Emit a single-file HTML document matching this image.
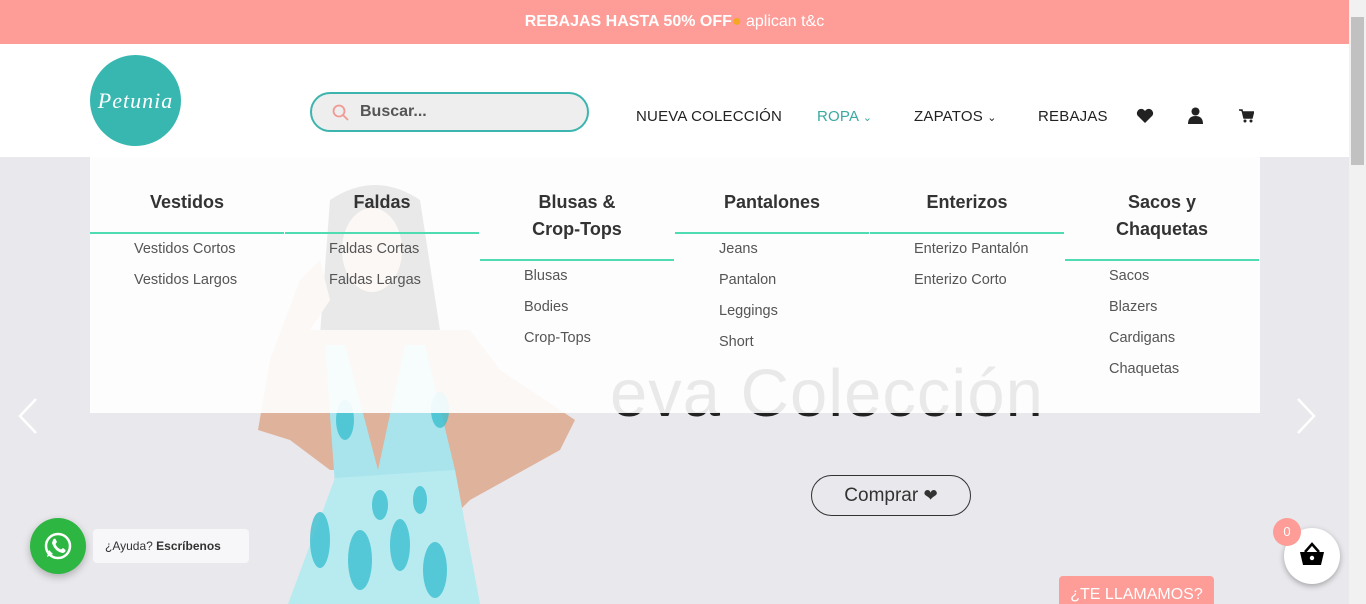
<!DOCTYPE html>
<html><head><meta charset="utf-8">
<style>
*{margin:0;padding:0;box-sizing:border-box}
html,body{width:1366px;height:604px;overflow:hidden;background:#e9e8ec;font-family:"Liberation Sans",sans-serif;position:relative}
.abs{position:absolute}
#banner{left:0;top:0;width:1349px;height:44px;background:#fe9c97;color:#fff;text-align:center;font-size:16px;line-height:44px}
#header{left:0;top:44px;width:1349px;height:113px;background:#fff}
#logo{left:90px;top:55px;width:91px;height:91px;border-radius:50%;background:#37b7b0;color:#fff;font-size:22px;text-align:center;line-height:91px;font-family:"Liberation Serif",serif;font-style:italic;letter-spacing:1px}
#search{left:310px;top:92px;width:279px;height:40px;border:2px solid #3bb5ae;border-radius:20px;background:#eeeeee}
#search span{position:absolute;left:48px;top:9px;font-size:16px;font-weight:bold;color:#555}
.nav{top:108px;font-size:15px;color:#222;letter-spacing:.2px}
#panel{left:90px;top:157px;width:1170px;height:256px;background:rgba(255,255,255,.9)}
.col{position:absolute;top:0;width:194px}
.col h3{font-size:18px;font-weight:bold;color:#333;text-align:center;line-height:27px;padding-top:32px}
.col .ln{height:2px;background:#4fdcb3;margin-top:16px}
.col ul{list-style:none;padding-left:44px;margin-top:0}
.col li{font-size:14.5px;color:#555;line-height:31px}
#hero{left:610px;top:355px;font-size:67px;color:#222;white-space:nowrap;letter-spacing:1px}
#btn{left:811px;top:475px;width:160px;height:41px;border:1px solid #333;border-radius:21px;font-size:19px;color:#333;text-align:center;line-height:39px}
#sb{left:1349px;top:0;width:17px;height:604px;background:#f1f1f1}
</style></head><body>
<svg class="abs" style="left:0;top:0" width="1366" height="604">
<path d="M330 200 Q375 170 420 200 L440 330 L320 335 Z" fill="#2b2320"/>
<ellipse cx="372" cy="250" rx="30" ry="42" fill="#e0b39e"/>
<path d="M310 330 L470 330 L500 370 L575 420 L560 450 L470 500 L450 520 L445 470 L330 470 L290 440 L258 430 L270 360 L300 280 L320 260 L330 300 Z" fill="#dfb29c"/>
<path d="M325 345 L345 345 L378 470 L405 345 L425 345 L455 470 L448 480 L335 485 Z" fill="#a9e4ec"/>
<path d="M335 478 L455 470 L480 604 L288 604 Z" fill="#b7ebf0"/>
<g fill="#3cc0d0" opacity=".8">
<ellipse cx="345" cy="420" rx="9" ry="20"/><ellipse cx="440" cy="410" rx="9" ry="18"/>
<ellipse cx="320" cy="540" rx="10" ry="28"/><ellipse cx="360" cy="560" rx="12" ry="30"/>
<ellipse cx="400" cy="545" rx="10" ry="26"/><ellipse cx="435" cy="570" rx="12" ry="28"/>
<ellipse cx="380" cy="505" rx="8" ry="15"/><ellipse cx="420" cy="500" rx="7" ry="14"/>
</g>
</svg>
<div id="banner" class="abs"><b>REBAJAS HASTA 50% OFF</b><span style="color:#f5a623">&#9679;</span> aplican t&amp;c</div>
<div id="header" class="abs"></div>
<div id="logo" class="abs">Petunia</div>
<div id="search" class="abs"><svg style="position:absolute;left:20px;top:10px" width="18" height="18"><circle cx="7" cy="7" r="5.5" fill="none" stroke="#f19a94" stroke-width="1.8"/><line x1="11" y1="11" x2="16" y2="16" stroke="#f19a94" stroke-width="1.8"/></svg><span>Buscar...</span></div>
<div class="abs nav" style="left:636px">NUEVA COLECCIÓN</div>
<div class="abs nav" style="left:817px;color:#3aa9a0">ROPA <span style="font-size:11px">&#8964;</span></div>
<div class="abs nav" style="left:914px">ZAPATOS <span style="font-size:11px">&#8964;</span></div>
<div class="abs nav" style="left:1038px">REBAJAS</div>
<svg class="abs" style="left:1136px;top:108px" width="18" height="16"><path d="M9 15 L1.5 7.5 A4 4 0 0 1 9 3 A4 4 0 0 1 16.5 7.5 Z" fill="#222"/></svg>
<svg class="abs" style="left:1188px;top:107px" width="15" height="17"><circle cx="7.5" cy="4.5" r="4" fill="#222"/><path d="M0 17 Q0 9 7.5 9 Q15 9 15 17 Z" fill="#222"/></svg>
<svg class="abs" style="left:1239px;top:109px" width="15" height="14"><path d="M0 1 H3 L5 9 H13 L14.5 3 H4" fill="#222" stroke="#222" stroke-width="1.5"/><circle cx="6" cy="12" r="1.5" fill="#222"/><circle cx="12" cy="12" r="1.5" fill="#222"/></svg>
<div id="hero" class="abs">eva Colección</div>
<div id="panel" class="abs">
<div class="col" style="left:0"><h3>Vestidos</h3><div class="ln"></div><ul><li>Vestidos Cortos</li><li>Vestidos Largos</li></ul></div>
<div class="col" style="left:195px"><h3>Faldas</h3><div class="ln"></div><ul><li>Faldas Cortas</li><li>Faldas Largas</li></ul></div>
<div class="col" style="left:390px"><h3>Blusas &amp;<br>Crop-Tops</h3><div class="ln"></div><ul><li>Blusas</li><li>Bodies</li><li>Crop-Tops</li></ul></div>
<div class="col" style="left:585px"><h3>Pantalones</h3><div class="ln"></div><ul><li>Jeans</li><li>Pantalon</li><li>Leggings</li><li>Short</li></ul></div>
<div class="col" style="left:780px"><h3>Enterizos</h3><div class="ln"></div><ul><li>Enterizo Pantalón</li><li>Enterizo Corto</li></ul></div>
<div class="col" style="left:975px"><h3>Sacos y<br>Chaquetas</h3><div class="ln"></div><ul><li>Sacos</li><li>Blazers</li><li>Cardigans</li><li>Chaquetas</li></ul></div>
</div>
<svg class="abs" style="left:16px;top:397px" width="24" height="38"><path d="M20 2 L4 19 L20 36" fill="none" stroke="#fff" stroke-width="2.5"/></svg>
<svg class="abs" style="left:1294px;top:397px" width="24" height="38"><path d="M4 2 L20 19 L4 36" fill="none" stroke="#fff" stroke-width="2.5"/></svg>
<div id="btn" class="abs">Comprar <span style="font-size:17px">&#10084;</span></div>
<div class="abs" style="left:30px;top:518px;width:56px;height:56px;border-radius:50%;background:#2db742;box-shadow:0 3px 8px rgba(0,0,0,.25)"><svg width="56" height="56"><circle cx="28" cy="28" r="12" fill="none" stroke="#fff" stroke-width="2.5"/><path d="M17 39 L19 32 L23 36 Z" fill="#fff"/><path d="M23 22 Q24 20 25.5 21 L27 24 L25.5 26 Q27 30 31 31.5 L33 30 L35.5 32 Q36 34 33 35 Q25 34 22 25 Z" fill="#fff"/></svg></div>
<div class="abs" style="left:93px;top:529px;width:156px;height:34px;background:#f7f7f9;border-radius:4px;font-size:12px;color:#333;line-height:34px;padding-left:12px">¿Ayuda? <b>Escríbenos</b></div>
<div class="abs" style="left:1059px;top:576px;width:155px;height:28px;background:#fe9c97;border-radius:4px 4px 0 0;color:#fff;font-size:16px;text-align:center;line-height:38px;overflow:hidden">¿TE LLAMAMOS?</div>
<div class="abs" style="left:1284px;top:528px;width:56px;height:56px;border-radius:50%;background:#fff;box-shadow:0 2px 6px rgba(0,0,0,.3)"><svg width="56" height="56"><path d="M21 24 L28 16 L35 24" fill="none" stroke="#000" stroke-width="2.5"/><path d="M16 24 H40 L37 37 H19 Z" fill="#000"/><circle cx="28" cy="30" r="2.2" fill="#fff"/></svg></div>
<div class="abs" style="left:1273px;top:518px;width:28px;height:28px;border-radius:50%;background:#fe9c97;color:#fff;font-size:13px;text-align:center;line-height:28px">0</div>
<div id="sb" class="abs"><div style="position:absolute;left:2px;top:17px;width:13px;height:148px;background:#c1c1c1"></div></div>
</body></html>
